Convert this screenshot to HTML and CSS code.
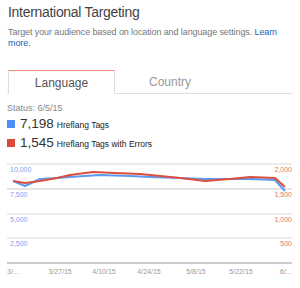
FILE: index.html
```html
<!DOCTYPE html>
<html lang="en">
<head>
    <meta charset="UTF-8">
    <meta name="viewport" content="width=device-width, initial-scale=1.0">
    <title>International Targeting</title>
    <link rel="stylesheet" href="styles.css">
</head>
<body>
<h1>International Targeting</h1>
<p class="intro">Target your audience based on location and language settings. <a href="#">Learn more.</a></p>

<div class="tabs">
    <div class="tab active">Language</div>
    <div class="tab">Country</div>
</div>

<p class="status">Status: 6/5/15</p>
<ul class="legend">
    <li><span class="swatch blue"></span><span class="count">7,198</span> Hreflang Tags</li>
    <li><span class="swatch red"></span><span class="count">1,545</span> Hreflang Tags with Errors</li>
</ul>

<div class="chart">
    <svg width="285" height="120" viewBox="0 0 285 120">
        <!-- grid -->
        <line class="grid" x1="0" y1="5" x2="285" y2="5"/>
        <line class="grid dark" x1="0" y1="30" x2="285" y2="30"/>
        <line class="grid" x1="0" y1="55" x2="285" y2="55"/>
        <line class="grid" x1="0" y1="79" x2="285" y2="79"/>
        <line class="axis" x1="0" y1="104" x2="285" y2="104"/>

        <!-- left axis (Hreflang Tags) -->
        <text class="lbl-left" x="3" y="13">10,000</text>
        <text class="lbl-left" x="3" y="38">7,500</text>
        <text class="lbl-left" x="3" y="63">5,000</text>
        <text class="lbl-left" x="3" y="87">2,500</text>

        <!-- right axis (errors) -->
        <text class="lbl-right" x="285" y="13">2,000</text>
        <text class="lbl-right" x="285" y="38">1,500</text>
        <text class="lbl-right" x="285" y="63">1,000</text>
        <text class="lbl-right" x="285" y="87">500</text>

        <polyline class="series blue" points="6,22 18,27 33,20 50,19 63,18 93,16 123,17 143,18 173,19 198,20 223,20 243,20 268,21 278,32"/>
        <polyline class="series red" points="6,22 18,24 33,22 50,19 63,16 86,13 108,14 133,15 143,16 173,19 198,22 223,20 243,18 268,19 278,28"/>

        <text class="lbl-x" x="0" y="115">3/...</text>
        <text class="lbl-x mid" x="53" y="115">3/27/15</text>
        <text class="lbl-x mid" x="97" y="115">4/10/15</text>
        <text class="lbl-x mid" x="142" y="115">4/24/15</text>
        <text class="lbl-x mid" x="189" y="115">5/8/15</text>
        <text class="lbl-x mid" x="234" y="115">5/22/15</text>
        <text class="lbl-x" x="273" y="115">6/...</text>
    </svg>
</div>
</body>
</html>
```
FILE: styles.css
```css
body {
    font-family: "Liberation Sans", Arial, sans-serif;
    margin: 0;
    padding: 4px 8px 0 7px;
    color: #222;
    background: #fff;
}
h1 {
    font-size: 14px;
    font-weight: normal;
    letter-spacing: -0.3px;
    color: #444;
    margin: 0 0 0 1px;
    line-height: 17px;
}
.intro {
    font-size: 9px;
    line-height: 11px;
    color: #777;
    margin: 6px 0 0 1px;
    letter-spacing: -0.1px;
}
.intro a {
    color: #1a5fb4;
    text-decoration: none;
}
.tabs {
    display: flex;
    margin-top: 21px;
    border-bottom: 1px solid #ddd;
    height: 23px;
}
.tab {
    width: 105px;
    text-align: center;
    font-size: 12px;
    line-height: 24px;
    color: #999;
}
.tab.active {
    margin-left: 1px;
    color: #555;
    background: #fff;
    border-top: 1px solid #f28b7d;
    border-left: 1px solid #ddd;
    border-right: 1px solid #ddd;
    margin-bottom: -1px;
    height: 23px;
}
.tab + .tab {
    width: 110px;
}
.status {
    font-size: 9px;
    color: #888;
    margin: 9px 0 0;
    line-height: 10px;
}
.legend {
    list-style-type: none;
    padding: 0;
    margin: 2px 0 0;
}
.legend li {
    display: flex;
    align-items: baseline;
    font-size: 8.5px;
    line-height: 17px;
    color: #222;
}
.swatch {
    display: inline-block;
    width: 8px;
    height: 8px;
    margin-right: 5px;
}
.swatch.blue {
    background-color: #4d8ff5;
}
.swatch.red {
    background-color: #dc4a38;
}
.count {
    font-size: 13.5px;
    color: #333;
    margin-right: 3px;
}
.chart {
    margin-top: 6px;
}
.chart svg {
    display: block;
}
.grid {
    stroke: #e6e6e6;
    stroke-width: 1.5;
}
.grid.dark {
    stroke: #c8c8c8;
    stroke-width: 1;
}
.axis {
    stroke: #999;
    stroke-width: 1;
}
.lbl-left, .lbl-right, .lbl-x {
    font-family: "Liberation Sans", Arial, sans-serif;
    font-size: 7px;
}
.lbl-left {
    fill: #7aa3ee;
}
.lbl-right {
    fill: #e8776b;
    text-anchor: end;
}
.lbl-x {
    fill: #999;
}
.lbl-x.mid {
    text-anchor: middle;
}
.series {
    fill: none;
    stroke-width: 2;
    stroke-linejoin: round;
}
.series.blue {
    stroke: #5c9af5;
}
.series.red {
    stroke: #dc4f3c;
}
```
